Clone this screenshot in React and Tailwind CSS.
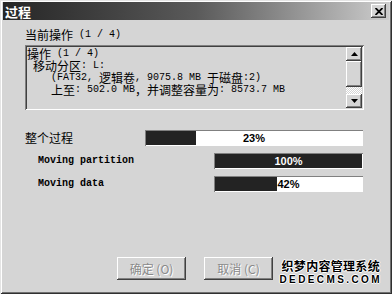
import React from "react";

const CJK = /[\u3000-\u9fff\uff00-\uffef]/;

function Mix({ text }) {
  const parts = text.split(/([\u3000-\u9fff\uff00-\uffef]+)/).filter((p) => p !== "");
  return parts.map((p, i) =>
    CJK.test(p) ? (
      <span key={i} className="font-['Noto_Sans_CJK_SC',sans-serif] text-[12px] leading-[11px]">
        {p}
      </span>
    ) : (
      <span key={i} className="font-['Liberation_Mono',monospace] text-[10px] leading-[11px]">
        {p}
      </span>
    )
  );
}

function Line({ text }) {
  return (
    <div className="flex items-center h-[12px] whitespace-pre text-black">
      <Mix text={text} />
    </div>
  );
}

function Bar({ pct, widthClass }) {
  return (
    <div
      className={`relative h-[16px] bg-white shadow-[inset_1px_1px_0_#808080,inset_-1px_-1px_0_#ffffff] ${widthClass}`}
    >
      <div className="absolute left-[1px] top-[1px] bottom-[1px] right-[1px]">
        <div className="h-full bg-[#232323]" style={{ width: `${pct}%` }} />
        <div className="absolute inset-0 flex items-center justify-center font-['Liberation_Sans',sans-serif] font-bold text-[11px] leading-[11px] text-black">
          {pct}%
        </div>
        <div
          className="absolute inset-0 flex items-center justify-center font-['Liberation_Sans',sans-serif] font-bold text-[11px] leading-[11px] text-white"
          style={{ clipPath: `inset(0 ${100 - pct}% 0 0)` }}
        >
          {pct}%
        </div>
      </div>
    </div>
  );
}

function Btn({ label, k }) {
  return (
    <div className="w-[69px] h-[23px] flex items-center justify-center bg-[#d5d5d5] shadow-[inset_-1px_-1px_0_#404040,inset_1px_1px_0_#ffffff,inset_-2px_-2px_0_#808080] font-['Noto_Sans_CJK_SC',sans-serif] text-[12px] leading-[12px] text-[#8a8a8a] [text-shadow:1px_1px_0_#ffffff] whitespace-pre">
      {label} ({k})
    </div>
  );
}

export default function App() {
  return (
    <div className="w-[392px] h-[294px] relative bg-[#d5d5d5] pt-[2px] px-[3px] pb-[3px] shadow-[inset_1px_1px_0_#e4e4e4,inset_-1px_-1px_0_#303030,inset_2px_2px_0_#ffffff,inset_-2px_-2px_0_#707070] overflow-hidden">
      {/* title bar */}
      <div className="h-[18px] flex items-center justify-between pl-[2px] pr-[3px] bg-linear-to-r from-[#262626] via-[#5a5a5a] to-[#cdcdcd]">
        <span className="font-['Noto_Sans_CJK_SC',sans-serif] font-bold text-[13px] leading-[13px] text-white">
          过程
        </span>
        <div className="w-[15px] h-[14px] flex items-center justify-center bg-[#d5d5d5] shadow-[inset_-1px_-1px_0_#404040,inset_1px_1px_0_#ffffff,inset_-2px_-2px_0_#808080]">
          <svg width="8" height="7" viewBox="0 0 8 7">
            <path d="M0.5 0 L7.5 7 M7.5 0 L0.5 7" stroke="#000" strokeWidth="1.8" />
          </svg>
        </div>
      </div>

      {/* content */}
      <div className="pl-[22px] pr-[25px] flex flex-col">
        <div className="mt-[8px]">
          <Line text="当前操作 (1 / 4)" />
        </div>

        {/* list box */}
        <div className="mt-[5px] h-[65px] flex p-[2px] bg-[#d5d5d5] shadow-[inset_1px_1px_0_#808080,inset_-1px_-1px_0_#ffffff,inset_2px_2px_0_#404040,inset_-2px_-2px_0_#d5d5d5]">
          <div className="flex-1 flex flex-col">
            <Line text="操作 (1 / 4)" />
            <Line text=" 移动分区: L:" />
            <Line text="    (FAT32, 逻辑卷, 9075.8 MB 于磁盘:2)" />
            <Line text="    上至: 502.0 MB，并调整容量为: 8573.7 MB" />
          </div>
          <div className="w-[16px] flex flex-col">
            <div className="h-[14px] flex items-center justify-center bg-[#d5d5d5] shadow-[inset_-1px_-1px_0_#404040,inset_1px_1px_0_#ffffff,inset_-2px_-2px_0_#808080]">
              <svg width="7" height="4" viewBox="0 0 7 4">
                <path d="M0 4 L3.5 0 L7 4Z" fill="#000" />
              </svg>
            </div>
            <div className="h-[26px] bg-[#d5d5d5] shadow-[inset_-1px_-1px_0_#404040,inset_1px_1px_0_#ffffff,inset_-2px_-2px_0_#808080]" />
            <div className="h-[7px] bg-[repeating-conic-gradient(#ffffff_0_25%,#d5d5d5_0_50%)] bg-[length:2px_2px]" />
            <div className="h-[14px] flex items-center justify-center bg-[#d5d5d5] shadow-[inset_-1px_-1px_0_#404040,inset_1px_1px_0_#ffffff,inset_-2px_-2px_0_#808080]">
              <svg width="7" height="4" viewBox="0 0 7 4">
                <path d="M0 0 L3.5 4 L7 0Z" fill="#000" />
              </svg>
            </div>
          </div>
        </div>

        {/* progress rows */}
        <div className="mt-[20px] flex items-center justify-between pr-[1px]">
          <span className="font-['Noto_Sans_CJK_SC',sans-serif] text-[12px] leading-[12px] text-black">
            整个过程
          </span>
          <Bar pct={23} widthClass="w-[218px]" />
        </div>
        <div className="mt-[7px] flex items-center justify-between pl-[13px] pr-[1px]">
          <span className="font-['Liberation_Mono',monospace] font-bold text-[10px] leading-[10px] text-black whitespace-pre">
            Moving partition
          </span>
          <Bar pct={100} widthClass="w-[149px]" />
        </div>
        <div className="mt-[7px] flex items-center justify-between pl-[13px] pr-[1px]">
          <span className="font-['Liberation_Mono',monospace] font-bold text-[10px] leading-[10px] text-black whitespace-pre">
            Moving data
          </span>
          <Bar pct={42} widthClass="w-[149px]" />
        </div>

        {/* buttons */}
        <div className="mt-[65px] flex gap-[18px] pl-[92px]">
          <Btn label="确定" k="O" />
          <Btn label="取消" k="C" />
        </div>
      </div>

      {/* watermark */}
      <div className="absolute right-[10px] bottom-[10px] flex flex-col items-center">
        <span className="font-['Noto_Sans_CJK_SC',sans-serif] font-bold text-[12px] leading-[12px] tracking-[0.3px] text-black [text-shadow:1px_0_0_#fff,-1px_0_0_#fff,0_1px_0_#fff,0_-1px_0_#fff]">
          织梦内容管理系统
        </span>
        <span className="mt-[3px] font-['Liberation_Sans',sans-serif] font-bold text-[10px] leading-[9px] tracking-[2.4px] text-black [text-shadow:1px_0_0_#fff,-1px_0_0_#fff,0_1px_0_#fff,0_-1px_0_#fff]">
          DEDECMS.COM
        </span>
      </div>
    </div>
  );
}
